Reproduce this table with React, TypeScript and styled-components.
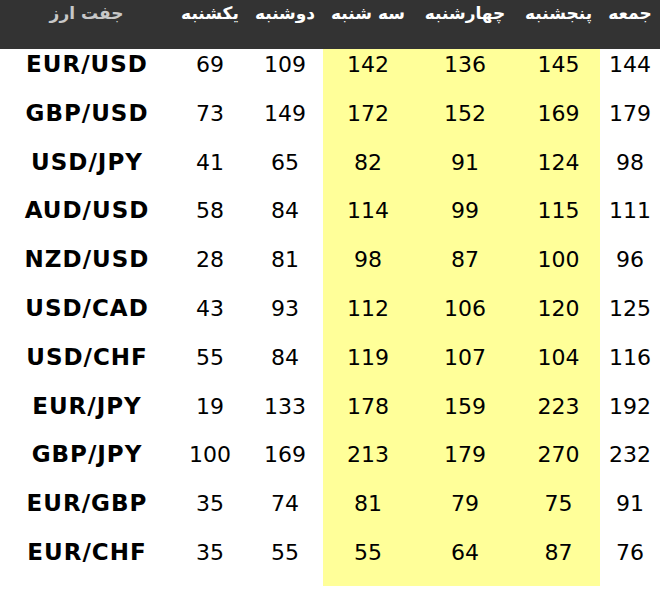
import React from "react";
import styled, { createGlobalStyle } from "styled-components";

const Global = createGlobalStyle`
  html, body { margin: 0; padding: 0; background: #ffffff; }
  body { font-family: "DejaVu Sans", Verdana, sans-serif; }
`;

const COLS = "173px 74px 76px 90px 104px 83px 60px";

const Table = styled.div`
  width: 660px;
  display: grid;
  grid-template-columns: ${COLS};
`;

const HeadCell = styled.div<{ $muted?: boolean }>`
  height: 49px;
  box-sizing: border-box;
  background: #333333;
  color: ${(p) => (p.$muted ? "#c8c8c8" : "#ffffff")};
  font-family: "DejaVu Sans", Tahoma, sans-serif;
  font-weight: bold;
  font-size: 17px;
  text-align: center;
  direction: rtl;
  white-space: nowrap;
  padding-top: 3px;
`;

const Cell = styled.div<{ $hl?: boolean; $pair?: boolean }>`
  height: 48.8px;
  box-sizing: border-box;
  padding-top: ${(p) => (p.$pair ? "2px" : "3px")};
  padding-left: ${(p) => (p.$pair ? "1px" : "0")};
  background: ${(p) => (p.$hl ? "#ffff99" : "#ffffff")};
  color: #000000;
  font-family: "DejaVu Sans", Verdana, sans-serif;
  font-size: ${(p) => (p.$pair ? "23px" : "22px")};
  font-weight: ${(p) => (p.$pair ? "bold" : "normal")};
  letter-spacing: ${(p) => (p.$pair ? "1px" : "0")};
  text-align: center;
  white-space: nowrap;
`;

const headers = ["جفت ارز", "يكشنبه", "دوشنبه", "سه شنبه", "چهارشنبه", "پنجشنبه", "جمعه"];

const rows: [string, number[]][] = [
  ["EUR/USD", [69, 109, 142, 136, 145, 144]],
  ["GBP/USD", [73, 149, 172, 152, 169, 179]],
  ["USD/JPY", [41, 65, 82, 91, 124, 98]],
  ["AUD/USD", [58, 84, 114, 99, 115, 111]],
  ["NZD/USD", [28, 81, 98, 87, 100, 96]],
  ["USD/CAD", [43, 93, 112, 106, 120, 125]],
  ["USD/CHF", [55, 84, 119, 107, 104, 116]],
  ["EUR/JPY", [19, 133, 178, 159, 223, 192]],
  ["GBP/JPY", [100, 169, 213, 179, 270, 232]],
  ["EUR/GBP", [35, 74, 81, 79, 75, 91]],
  ["EUR/CHF", [35, 55, 55, 64, 87, 76]],
];

export default function App() {
  return (
    <>
      <Global />
      <Table>
        {headers.map((h, i) => (
          <HeadCell key={h} $muted={i === 0}>
            {h}
          </HeadCell>
        ))}
        {rows.map(([pair, vals]) => (
          <React.Fragment key={pair}>
            <Cell $pair>{pair}</Cell>
            {vals.map((v, i) => (
              <Cell key={i} $hl={i >= 2 && i <= 4}>
                {v}
              </Cell>
            ))}
          </React.Fragment>
        ))}
      </Table>
    </>
  );
}
